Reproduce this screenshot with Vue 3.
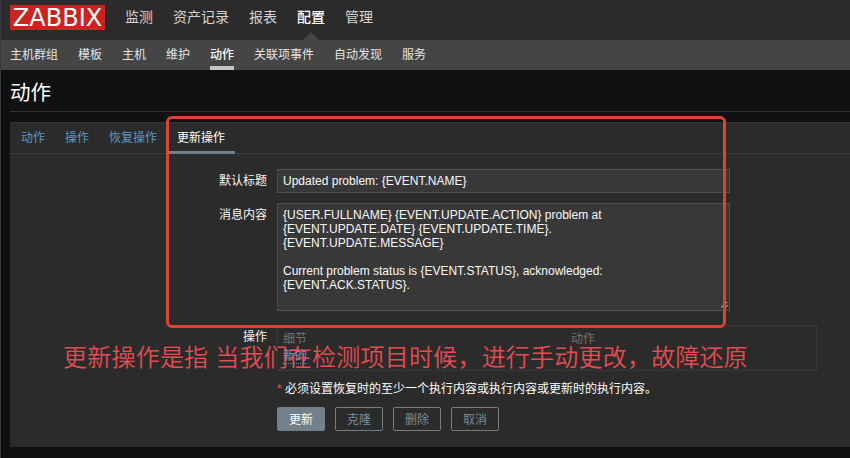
<script setup>
const mainMenu = ['监测', '资产记录', '报表', '配置', '管理']
const subMenu = ['主机群组', '模板', '主机', '维护', '动作', '关联项事件', '自动发现', '服务']
const tabs = ['动作', '操作', '恢复操作', '更新操作']
const buttons = ['更新', '克隆', '删除', '取消']
const message = `{USER.FULLNAME} {EVENT.UPDATE.ACTION} problem at
{EVENT.UPDATE.DATE} {EVENT.UPDATE.TIME}.
{EVENT.UPDATE.MESSAGE}

Current problem status is {EVENT.STATUS}, acknowledged:
{EVENT.ACK.STATUS}.`
</script>

<template>
  <div class="page">
    <header class="top">
      <div class="logo">ZABBIX</div>
      <nav class="main-nav">
        <a v-for="m in mainMenu" :key="m" :class="{ active: m === '配置' }">{{ m }}</a>
      </nav>
    </header>
    <nav class="sub-nav">
      <a v-for="m in subMenu" :key="m" :class="{ active: m === '动作' }">{{ m }}</a>
    </nav>
    <h1>动作</h1>
    <main class="panel">
      <nav class="tabs">
        <a v-for="t in tabs" :key="t" :class="{ active: t === '更新操作' }">{{ t }}</a>
      </nav>
      <div class="form">
        <label>默认标题</label>
        <div class="field subject"><span class="latin">Updated problem: {EVENT.NAME}</span></div>
        <label>消息内容</label>
        <div class="field message">
          <span class="latin">{{ message }}</span>
          <svg class="grip" width="8" height="8" viewBox="0 0 8 8">
            <path d="M1 6.5L7 1M3.5 7.5L7.5 4.5" stroke="#dcdcdc" fill="none" />
          </svg>
        </div>
        <label>操作</label>
        <div class="operations">
          <span>细节</span><span>动作</span>
          <a class="new">新的</a>
        </div>
        <p class="note"><i>*</i>必须设置恢复时的至少一个执行内容或执行内容或更新时的执行内容。</p>
        <div class="buttons">
          <button v-for="(b, i) in buttons" :key="b" :class="{ primary: i === 0 }">{{ b }}</button>
        </div>
      </div>
    </main>
    <div class="highlight"></div>
    <div class="annotation">更新操作是指 当我们在检测项目时候，进行手动更改，故障还原</div>
  </div>
</template>

<style>
body { margin: 0; background: #0e1012; overflow: hidden; }
</style>

<style scoped>
.page {
  position: relative;
  box-sizing: border-box;
  width: 850px;
  height: 458px;
  overflow: hidden;
  background: #0e1012;
  border-left: 1px solid #3a3b3c;
  color: #f6f6f6;
  font: 12px/18px "Liberation Sans", "Noto Sans CJK SC", sans-serif;
}
.top {
  display: flex;
  height: 40px;
  box-sizing: border-box;
  padding: 5px 9px 0;
  background: #2b2b2b;
}
.logo {
  width: 95px;
  height: 25px;
  background: #c9241f;
  color: #fff;
  font: 24px/26px "DejaVu Sans", sans-serif;
  text-align: center;
}
.main-nav { display: flex; gap: 20px; margin-left: 20px; font-size: 14px; line-height: 24px; color: #d4d4d4; }
.main-nav a { position: relative; height: 35px; }
.main-nav .active { color: #fff; font-weight: 500; }
.main-nav .active::after {
  content: "";
  position: absolute;
  left: 50%;
  bottom: 0;
  margin-left: -8px;
  border: 8px solid transparent;
  border-top: 0;
  border-bottom-color: #454545;
}
.sub-nav {
  display: flex;
  gap: 20px;
  height: 30px;
  padding: 0 9px;
  background: #454545;
  color: #e4e4e4;
  line-height: 30px;
}
.sub-nav .active { box-sizing: border-box; height: 30px; border-bottom: 4px solid #c4c4c4; color: #fff; font-weight: 500; }
h1 {
  height: 41px;
  margin: 0 0 10px 9px;
  border-bottom: 1px solid #303132;
  font-size: 20.5px;
  font-weight: 400;
  line-height: 45px;
  color: #fff;
}
.panel {
  box-sizing: border-box;
  height: 325px;
  margin-left: 9px;
  border-top: 1px solid #343536;
  background: #2b2b2b;
}
.tabs {
  display: flex;
  box-sizing: border-box;
  height: 31px;
  padding-left: 1px;
  border-bottom: 1px solid #3b3b3b;
  color: #5a98c8;
  line-height: 30px;
}
.tabs a { padding: 0 10px; box-sizing: border-box; height: 31px; }
.tabs .active { border-bottom: 3px solid #71808a; color: #fff; }
.form {
  display: grid;
  grid-template-columns: 257px 540px;
  column-gap: 10px;
  padding-top: 15px;
}
label { text-align: right; line-height: 24px; }
.field {
  box-sizing: border-box;
  width: 453px;
  padding: 4px 5px;
  border: 1px solid #4f4f4f;
  background: #383838;
  color: #fafafa;
  line-height: 14px;
}
.latin { font-family: "Liberation Sans", sans-serif; white-space: pre; }
.subject { height: 24px; margin-bottom: 10px; }
.message { position: relative; height: 108px; margin-bottom: 14px; }
.grip { position: absolute; right: 1px; bottom: 1px; }
.operations {
  display: grid;
  box-sizing: border-box;
  grid-template-columns: 288px 1fr;
  grid-template-rows: 18px 18px;
  height: 46px;
  padding: 4px 5px;
  border: 1px solid #383838;
  color: #737373;
}
.new { justify-self: start; height: 15px; border-bottom: 1px dotted #5a92bd; color: #4796d4; font-weight: 500; line-height: 16px; }
.note { grid-column: 2; margin: 9px 0; line-height: 18px; color: #fff; }
.note i { display: inline-block; width: 8px; color: #e45959; font-style: normal; }
.buttons { grid-column: 2; display: flex; gap: 10px; }
button {
  width: 48px;
  height: 24px;
  padding: 1px 0 0;
  border: 1px solid #71808a;
  border-radius: 2px;
  background: transparent;
  color: #768d99;
  font: inherit;
  line-height: 22px;
}
.primary { background: #71808a; color: #fff; }
.highlight {
  position: absolute;
  left: 165px;
  top: 116px;
  box-sizing: border-box;
  width: 560px;
  height: 212px;
  border: 3px solid #d9452f;
  border-radius: 6px;
}
.annotation {
  position: absolute;
  left: 62px;
  top: 340px;
  color: #e64c51;
  font-size: 24px;
  font-weight: 350;
  line-height: 36px;
  letter-spacing: 0.22px;
  white-space: nowrap;
}
</style>
